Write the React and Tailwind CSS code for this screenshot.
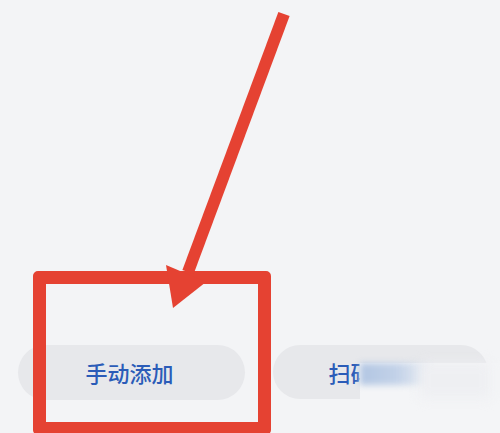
import React from "react";

export default function App() {
  const font = { fontFamily: '"Noto Sans CJK SC", "Noto Sans", sans-serif' };
  return (
    <div className="relative w-[500px] h-[433px] overflow-hidden bg-[#f3f4f6]" style={font}>
      <div className="flex flex-col h-full">
        <div className="flex-1" />
        <div className="flex gap-[28px] pl-[18px] pr-[12px] pb-[33px]">
          <button className="w-[227px] h-[55px] rounded-full bg-[#e7e8eb] text-[#2b5cb8] text-[22px] font-medium flex items-center justify-center pr-[4px]">
            手动添加
          </button>
          <button className="w-[215px] h-[54px] rounded-full bg-[#e7e8eb] text-[#2b5cb8] text-[22px] font-medium flex items-center justify-center pr-[16px]">
            扫码添加
          </button>
        </div>
      </div>

      {/* watermark patch */}
      <div className="absolute left-[360px] top-[363px] w-[140px] h-[70px] bg-[#f4f5f7]">
        <div className="absolute left-0 top-0 w-[75px] h-[22px] bg-gradient-to-r from-[#b2c6e3] via-[#c3d2e8] to-transparent blur-[3px]" />
        <div className="absolute left-[60px] top-0 w-[70px] h-[35px] bg-[#eeeff2] blur-[6px]" />
      </div>

      {/* red annotation rectangle */}
      <div className="absolute left-[33px] top-[271px] w-[238px] h-[164px] border-[13px] border-[#e54232] rounded-[5px]" />

      {/* red arrow */}
      <svg className="absolute left-0 top-0" width="500" height="433" viewBox="0 0 500 433">
        <line x1="284" y1="14" x2="188" y2="272" stroke="#e54232" strokeWidth="12" />
        <polygon points="166,265 206,282 173,308" fill="#e54232" />
      </svg>
    </div>
  );
}
